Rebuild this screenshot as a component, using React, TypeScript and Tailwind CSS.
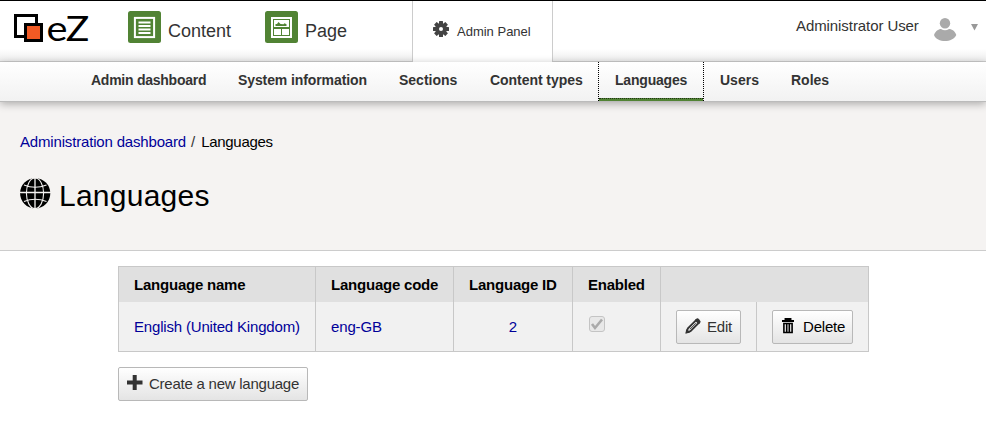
import type { ReactNode } from "react";

function Logo() {
  return (
    <svg width="110" height="56" viewBox="0 0 110 56" className="block">
      <rect x="15.5" y="15.5" width="21" height="21" fill="#fff" stroke="#000" strokeWidth="3" />
      <rect x="25.5" y="24.5" width="16" height="16" fill="#f15a24" stroke="#000" strokeWidth="3" />
      <g fontFamily="Lato, sans-serif" fontSize="35.5" fill="#000">
        <text x="46.5" y="41.2" textLength="21" lengthAdjust="spacingAndGlyphs">e</text>
        <text x="65.8" y="41.2" textLength="23.5" lengthAdjust="spacingAndGlyphs">Z</text>
      </g>
    </svg>
  );
}

function ContentIcon() {
  return (
    <svg width="33" height="32" viewBox="0 0 33 32">
      <rect width="33" height="32" rx="2.5" fill="#518334" />
      <rect x="6.9" y="6.9" width="19.2" height="19.2" fill="none" stroke="#fff" strokeWidth="2" />
      <path d="M10.5 11.5h12M10.5 15h12M10.5 18.500h12M10.5 22h12" stroke="#fff" strokeWidth="2" />
    </svg>
  );
}

function PageIcon() {
  return (
    <svg width="33" height="32" viewBox="0 0 33 32">
      <rect width="33" height="32" rx="2.5" fill="#518334" />
      <rect x="6" y="6" width="21" height="21" fill="#fff" />
      <path d="M8 8h17v17h-17z" fill="#518334" />
      <path d="M9 9h15v7h-15zM9 18h7v6h-7zM17 18h7v6h-7z" fill="#fff" />
      <path d="M10.500 15v-2l1.500 0 1.500-2 2 2 3 .300 1-1 2 1V15z" fill="#518334" />
    </svg>
  );
}

function Gear() {
  return (
    <svg width="16" height="16" viewBox="0 0 16 16">
      <g fill="#444">
        {[0, 45, 90, 135].map((a) => (
          <rect key={a} x="6" y="0" width="4" height="16" rx="0.5" transform={`rotate(${a} 8 8)`} />
        ))}
        <circle cx="8" cy="8" r="6" />
      </g>
      <circle cx="8" cy="8" r="2" fill="#fff" />
    </svg>
  );
}

function Globe() {
  return (
    <svg width="31" height="31" viewBox="0 0 31 31">
      <circle cx="15.2" cy="15.3" r="15.1" fill="#000" />
      <g fill="none" stroke="#f5f3f2" strokeWidth="1.1">
        <path d="M15 0v31M0 14.500h31" strokeWidth="1.300" />
        <path d="M4 7q11 4.500 22.500 0M4 23.500q11-4.500 22.500 0" />
        <ellipse cx="15" cy="15.300" rx="8.600" ry="15.300" />
      </g>
    </svg>
  );
}

function NavItem({ children, width, tracking = "", active = false }: { children: string; width: number; tracking?: string; active?: boolean }) {
  return (
    <a
      className={
        active
          ? "flex h-[39px] flex-col border-x border-dotted border-black"
          : "flex h-[39px] flex-col"
      }
      style={{ width }}
    >
      <span className={`flex-1 pt-[8px] pl-[16px] ${tracking}`}>{children}</span>
      {active && <span className="h-[3px] border-t border-dotted border-black/60 bg-[#518334]" />}
    </a>
  );
}

function Button({ children, icon, className }: { children: ReactNode; icon: ReactNode; className: string }) {
  return (
    <button className={`flex h-[34px] items-center rounded-[2px] border border-[#b8b8b8] bg-linear-to-b from-white to-[#e4e4e4] whitespace-nowrap ${className}`}>
      {icon}
      {children}
    </button>
  );
}

export default function App() {
  return (
    <div className="h-[421px] w-[986px] overflow-hidden bg-white font-['Liberation_Sans',Arial,sans-serif] text-[15px] text-[#333]">
      <header className="flex h-[62px] border-t border-black">
        <div className="flex w-[413px] border-r border-b border-[#ccc] bg-linear-to-b from-white from-80% to-[#ededed]">
          <div className="-mt-px w-[128px]"><Logo /></div>
          <div className="flex w-[137px] pt-[10px] text-[18px]"><ContentIcon /><span className="pt-[7px] pl-[7px]">Content</span></div>
          <div className="flex pt-[10px] text-[18px]"><PageIcon /><span className="pt-[7px] pl-[7px]">Page</span></div>
        </div>
        <div className="flex w-[139px] pt-[20px] pl-[20px] text-[13px]"><Gear /><span className="pt-px pl-[8px]">Admin Panel</span></div>
        <div className="flex flex-1 border-b border-l border-[#ccc] bg-linear-to-b from-white from-80% to-[#ededed] pl-[243px]">
          <span className="w-[137px] pt-[14px] tracking-[-0.08px]">Administrator User</span>
          <svg width="24" height="24" viewBox="0 0 24 24" className="mt-[17px]" fill="#aaa">
            <circle cx="12" cy="5.300" r="5.200" />
            <path d="M1 17C2.500 12.500 6.500 11 8 11q4 2.500 8 0c2 0 6 1.500 7.300 6-2 4-6.500 6-11.300 6S2.500 21 1 17z" />
          </svg>
          <svg width="8" height="7" viewBox="0 0 8 7" className="mt-[23px] ml-[14px]" fill="#999"><path d="M0 0h7L3.500 6.500z" /></svg>
        </div>
      </header>
      <nav className="relative flex h-[40px] border-b border-[#bbb] bg-linear-to-b from-white to-[#f2f2f2] pl-[75px] text-[14px] font-bold whitespace-nowrap shadow-[0_2px_8px_rgba(0,0,0,0.3)]">
        <NavItem width={147} tracking="tracking-[-0.25px]">Admin dashboard</NavItem>
        <NavItem width={161} tracking="tracking-[-0.1px]">System information</NavItem>
        <NavItem width={91}>Sections</NavItem>
        <NavItem width={124} tracking="tracking-[-0.05px]">Content types</NavItem>
        <NavItem width={106} tracking="tracking-[-0.2px]" active>Languages</NavItem>
        <NavItem width={71}>Users</NavItem>
        <NavItem width={71}>Roles</NavItem>
      </nav>
      <section className="h-[149px] border-b border-[#ccc] bg-[#f5f3f2] pl-[20px]">
        <div className="flex pt-[29px] text-black">
          <a className="tracking-[-0.17px] text-[#009]">Administration dashboard</a>
          <span className="pr-[6px] pl-[5px] text-[#333]">/</span>
          <span className="tracking-[-0.3px]">Languages</span>
        </div>
        <h1 className="flex pt-[24px] text-[30px] leading-[36px] tracking-[0.25px] text-black"><Globe /><span className="pl-[8px]">Languages</span></h1>
      </section>
      <main className="pt-[15px] pl-[118px]">
        <table className="w-[751px] table-fixed border-collapse text-left [&_td]:border [&_td]:border-[#c8c8c8] [&_td]:px-[15px] [&_th]:border-x [&_th]:border-t [&_th]:border-[#c8c8c8] [&_th]:px-[15px]">
          <colgroup>
            <col className="w-[197px]" /><col className="w-[138px]" /><col className="w-[119px]" /><col className="w-[88px]" /><col className="w-[96px]" /><col className="w-[112px]" />
          </colgroup>
          <thead className="bg-[#e0e0e0] text-black">
            <tr className="h-[35px] tracking-[-0.22px] whitespace-nowrap"><th className="pt-px">Language name</th><th className="pt-px">Language code</th><th className="pt-px">Language ID</th><th className="pt-px">Enabled</th><th colSpan={2} /></tr>
          </thead>
          <tbody className="bg-[#f1f1f1] [&_td]:border-t-0 [&_td]:pt-[2px]">
            <tr className="h-[50px] whitespace-nowrap text-[#009]">
              <td className="tracking-[-0.18px]">English (United Kingdom)</td>
              <td className="tracking-[-0.15px]">eng-GB</td>
              <td className="text-center">2</td>
              <td>
                <svg width="18" height="18" viewBox="0 0 18 18" className="-mt-[6px]">
                  <rect x="1.500" y="1.500" width="15" height="15" rx="2.500" fill="#e8e8e8" stroke="#c4c4c4" />
                  <path d="M4 9l3 4 7-8.500" fill="none" stroke="#aaa" strokeWidth="2.600" />
                </svg>
              </td>
              <td>
                <Button className="w-[65px] pl-[8px] tracking-[-0.2px] text-[#333]" icon={
                  <svg width="16" height="16" viewBox="0 0 16 16" className="mr-[6px] -mt-[3px]" fill="none" stroke="#333">
                    <path d="M1.800 14.200l1-3.700L11 2.300l2.700 2.700-8.200 8.200z" strokeWidth="1.800" />
                    <path d="M10 1.900L12 .3Q13 0 14.300 1.500T15.700 4l-1.600 2z" fill="#333" stroke="none" />
                    <path d="M5 11.200l6-6" strokeWidth="1" />
                    <path d="M.5 15.500l.7-4.500 3.800 3.800z" fill="#333" stroke="none" />
                  </svg>
                }>Edit</Button>
              </td>
              <td>
                <Button className="w-[81px] pl-[9px] tracking-[-0.2px] text-black" icon={
                  <svg width="12" height="16" viewBox="0 0 12 16" className="mr-[9px] -mt-[3px]" fill="none" stroke="#000">
                    <path d="M0 3h12M3.500 2.500V1h5v1.500" strokeWidth="1.900" />
                    <path d="M1.900 5.500h8.200v9H1.900zM4.700 6v8M7.300 6v8" strokeWidth="1.600" />
                  </svg>
                }>Delete</Button>
              </td>
            </tr>
          </tbody>
        </table>
        <Button className="mt-[15px] w-[190px] pl-[8px] tracking-[-0.24px] text-[#333]" icon={
          <svg width="16" height="16" viewBox="0 0 16 16" className="mr-[6px] -mt-[3px]"><path d="M0 7.500h15.500M7.700 0v15" stroke="#333" strokeWidth="4" /></svg>
        }>Create a new language</Button>
      </main>
    </div>
  );
}
